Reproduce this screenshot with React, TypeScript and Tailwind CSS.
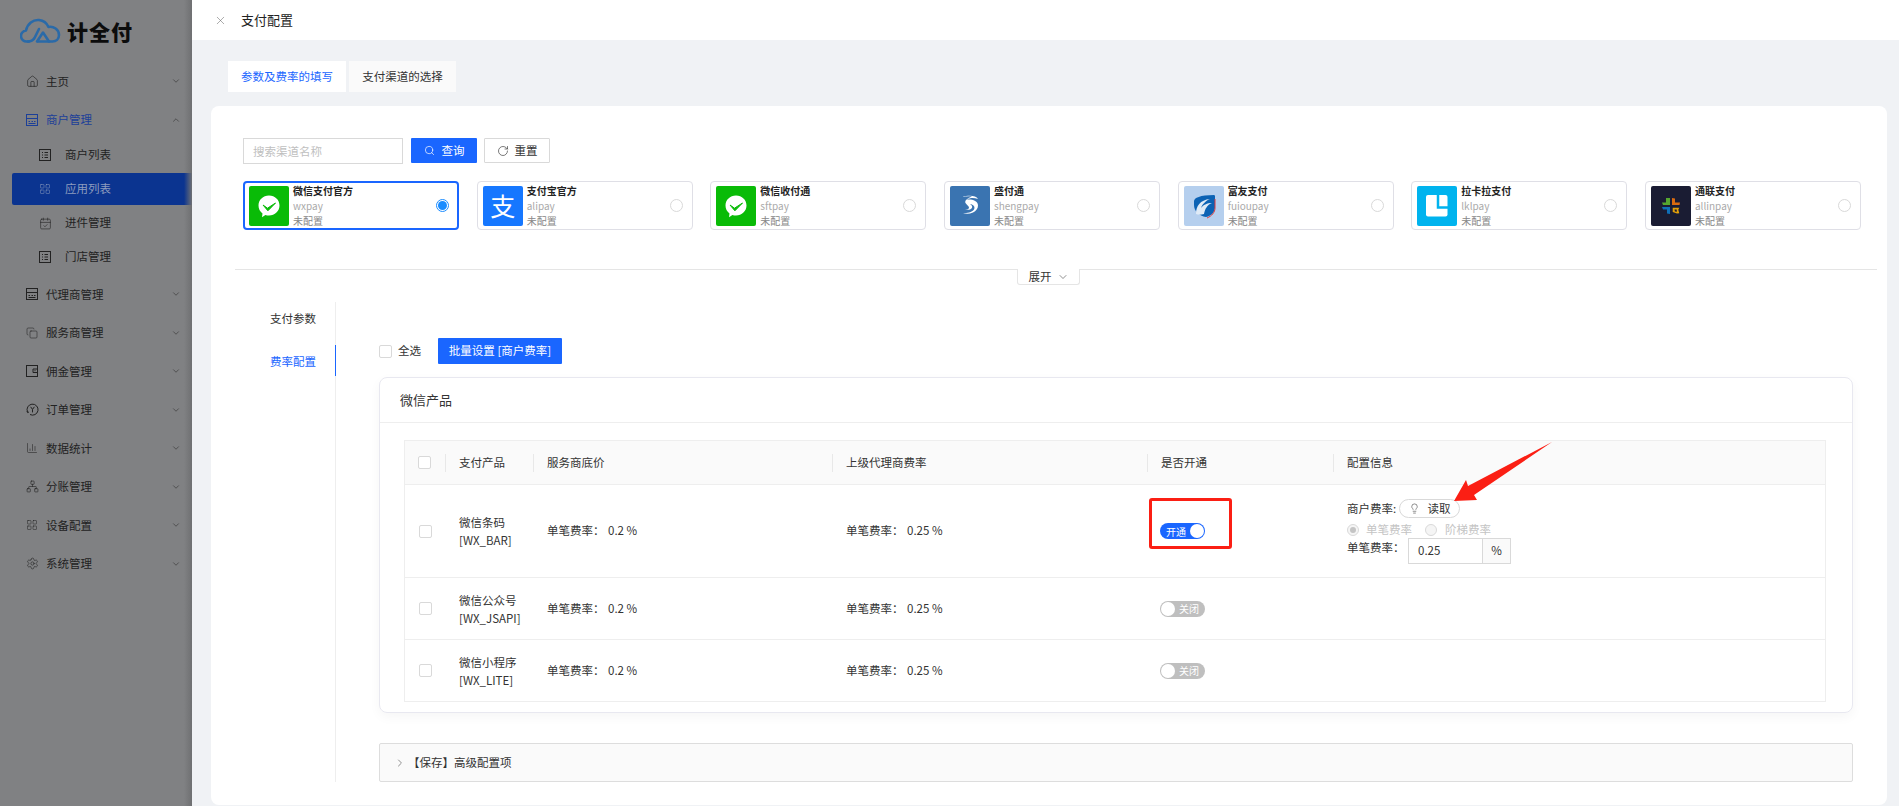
import React from "react";
import { Home, ChevronUp, ChevronDown, ChevronRight, LayoutGrid, Settings, Network, ChartColumn, Copy, X, Search, RotateCw, Lightbulb, CalendarCheck } from "lucide-react";

const BoxIcon = ({ c = "#222" }: { c?: string }) => (
  <svg width="12" height="12" viewBox="0 0 12 12" fill="none" stroke={c} strokeWidth="1"><rect x=".5" y=".5" width="11" height="11" /><path d="M.5 4.5h11M2.5 7.5h1.5M5.5 7.5h1.5M8 7.5h1.5M2.5 9.5h7" /></svg>
);
const ListIcon = () => (
  <svg width="12" height="12" viewBox="0 0 12 12" fill="none" stroke="#222" strokeWidth="1"><rect x=".5" y=".5" width="11" height="11" /><path d="M3 3.5h1M3 6h1M3 8.5h1M5.5 3.5H9M5.5 6H9M5.5 8.5H9" /></svg>
);
const WalletIcon = () => (
  <svg width="12" height="12" viewBox="0 0 12 12" fill="none" stroke="#222" strokeWidth="1"><rect x=".5" y=".5" width="11" height="11" /><path d="M11.5 4H7v3.5h4.5" /><path d="M8.5 5.7h1" /></svg>
);
const OrderIcon = () => (
  <svg width="13" height="13" viewBox="0 0 13 13" fill="none" stroke="#222" strokeWidth="1"><path d="M1.5 8.8A5.5 5.5 0 1 1 4 11.5M1 8l.5 1.6L3 9" /><path d="M4.6 3.8l1.9 2.6 1.9-2.6M6.5 6.4v3" /></svg>
);

const L = ({ children, cls = "" }: { children: React.ReactNode; cls?: string }) => <span className={cls}>{children}</span>;

const Top = ({ icon, label, up, active }: { icon: React.ReactNode; label: string; up?: boolean; active?: boolean }) => (
  <div className={`flex h-[38.5px] items-center pl-[26px] pr-[11px] text-[11.5px] ${active ? "text-[#1c3f98]" : "text-[#222]"}`}>
    <span className="flex w-[20px] shrink-0 items-center">{icon}</span>
    <span className="flex-1">{label}</span>
    {up ? <ChevronUp size={10} strokeWidth={1.5} color="#333" /> : <ChevronDown size={10} strokeWidth={1.5} color="#333" />}
  </div>
);
const Sub = ({ icon, label, active }: { icon: React.ReactNode; label: string; active?: boolean }) => (
  <div className={`ml-[12px] my-[2px] flex h-[32px] items-center rounded-l-[2px] pl-[27px] text-[11.5px] ${active ? "bg-[#0b3490] text-[#8d9cbe]" : "text-[#222]"}`}>
    <span className="flex w-[26px] shrink-0 items-center">{icon}</span>
    {label}
  </div>
);

const WeChat = () => (
  <svg viewBox="0 0 40 40" className="h-full w-full">
    <rect width="40" height="40" rx="2" fill="#09bb07" />
    <path d="M20 9.5c6 0 10.5 4.4 10.5 10s-4.600 10-10.500 10c-1.300 0-2.500-.2-3.600-.6l-3.400 2.300.5-3.800c-2.600-1.800-4-4.700-4-7.900 0-5.600 4.500-10 10.500-10z" fill="#fff" />
    <path d="M14 19l4.500 3.200 8-5.200-7.600 7.800z" fill="#09bb07" stroke="#09bb07" strokeWidth="1" strokeLinejoin="round" />
  </svg>
);
const Sheng = () => (
  <svg viewBox="0 0 40 40" className="h-full w-full">
    <rect width="40" height="40" rx="2" fill="#3a74b1" />
    <path d="M12 11c6-2 14-2 16 2-4-1.500-8-1.500-11 .5 5-.5 11 1 11 6 0 3-2 5.500-5 7-3.500 1.500-7 1.500-10 .5 4 0 9-.5 11-3.500 1.500-2.500-.5-5-4-5.500 2.500 1.500 3 3.500 1 5-2 1-4 1-6 .5 2 0 3.500-.5 4-1.500.3-1.500-2-3-3.500-5-1-2 1-4.500 6.500-6.500-3-.5-7 0-10.500.5z" fill="#fff" />
  </svg>
);
const Fuiou = () => (
  <svg viewBox="0 0 40 40" className="h-full w-full">
    <rect width="40" height="40" rx="2" fill="#b5cfee" />
    <path d="M10 15c0-3 6-6 20-6 1 0 1 1 1 2v10c0 4-3 9-9 10-7-1-12-6-12-12z" fill="#0c62b4" />
    <path d="M12 28c0-8 4-14 14-15-5 2-8 6-9 9 2-3 6-5 11-5-5 2-7 6-8 11-3 1-6 1-8 0z" fill="#dfeaf6" />
    <path d="M31 13v9c0 4-3 8-8 10" stroke="#e23a3a" strokeWidth="1" fill="none" />
  </svg>
);
const Lkl = () => (
  <svg viewBox="0 0 40 40" className="h-full w-full">
    <rect width="40" height="40" rx="2" fill="#00b3ee" />
    <rect x="9" y="9" width="21.500" height="21.500" rx="2" fill="#fff" />
    <path d="M21 8v13.500h10" stroke="#00b3ee" strokeWidth="2.500" fill="none" />
  </svg>
);
const Allin = () => (
  <svg viewBox="0 0 40 40" className="h-full w-full">
    <rect width="40" height="40" rx="2" fill="#1a1c33" />
    <path d="M19 12v7h-7l-1-2.500h4V12z" fill="#55a630" />
    <path d="M21 12l3 .5v4h5l-.5 2.500H21z" fill="#d96a10" />
    <path d="M11 21h8v7l-3-.5v-4h-4z" fill="#0e6fb8" />
    <path d="M21.700 21.700h6.600l-1 2 1 3.600-2.300.2-4.300-1.500zM23.500 23.500l.4 2 2 .3-.2-2.300z" fill="#e3a008" fillRule="evenodd" />
  </svg>
);

const channels = [
  { t: "微信支付官方", s: "wxpay", logo: <WeChat />, sel: true },
  { t: "支付宝官方", s: "alipay", logo: <div className="flex h-full w-full items-center justify-center rounded-[2px] bg-[#1677ff] text-[25px] leading-none text-white">支</div> },
  { t: "微信收付通", s: "sftpay", logo: <WeChat /> },
  { t: "盛付通", s: "shengpay", logo: <Sheng /> },
  { t: "富友支付", s: "fuioupay", logo: <Fuiou /> },
  { t: "拉卡拉支付", s: "lklpay", logo: <Lkl /> },
  { t: "通联支付", s: "allinpay", logo: <Allin /> },
];

const Check = () => <span className="block h-[13px] w-[13px] rounded-[2px] border border-[#d9d9d9] bg-white" />;

const Toggle = ({ on }: { on?: boolean }) =>
  on ? (
    <div className="flex h-[16px] w-[45px] items-center justify-between rounded-full bg-[#1a66ff] pl-[6px] pr-[1px] text-[10px] text-white">
      <span>开通</span>
      <span className="h-[14px] w-[14px] rounded-full bg-white" />
    </div>
  ) : (
    <div className="flex h-[16px] w-[45px] items-center justify-between rounded-full bg-[#bfbfbf] pl-[1px] pr-[6px] text-[10px] text-white">
      <span className="h-[14px] w-[14px] rounded-full bg-white" />
      <span>关闭</span>
    </div>
  );

const Rate = ({ v }: { v: string }) => (
  <span className="flex text-[11.5px] text-[#333]">
    <span className="w-[61px]">单笔费率：</span>
    <span>{v} %</span>
  </span>
);

const grid = "grid grid-cols-[40px_88px_299px_315px_186px_1fr]";

const Row = ({ name, code, h, on, config }: { name: string; code: string; h: string; on?: boolean; config?: boolean }) => (
  <div className={`${grid} ${h} border-t border-[#eeeeee] text-[11.5px] text-[#333]`}>
    <div className="flex items-center pl-[14px]"><Check /></div>
    <div className="flex flex-col justify-center pl-[14px] leading-[18px]">
      <span>{name}</span>
      <span>{code}</span>
    </div>
    <div className="flex items-center pl-[14px]"><Rate v="0.2" /></div>
    <div className="flex items-center pl-[14px]"><Rate v="0.25" /></div>
    <div className="relative flex items-center pl-[13px]">
      <Toggle on={on} />
      {config && <div className="absolute left-[2px] top-[13px] h-[51px] w-[83px] rounded-[3px] border-[3px] border-[#fb1f14]" />}
    </div>
    <div className="pl-[14px]">
      {config && (
        <div className="flex flex-col pt-[14px]">
          <div className="flex h-[19px] items-center">
            <span className="w-[52px]">商户费率:</span>
            <span className="flex h-[19px] w-[61px] items-center justify-center gap-[8px] rounded-full border border-[#d9d9d9] bg-white">
              <Lightbulb size={11} strokeWidth={1.3} color="#444" />
              读取
            </span>
          </div>
          <div className="flex h-[20px] items-center pt-[4px] text-[#c4c4c4]">
            <span className="flex h-[12px] w-[12px] items-center justify-center rounded-full border border-[#d9d9d9] bg-[#f5f5f5]"><span className="h-[6px] w-[6px] rounded-full bg-[#c4c4c4]" /></span>
            <span className="ml-[7px]">单笔费率</span>
            <span className="ml-[13px] h-[12px] w-[12px] rounded-full border border-[#d9d9d9] bg-[#f5f5f5]" />
            <span className="ml-[8px]">阶梯费率</span>
          </div>
          <div className="flex h-[26px] items-start">
            <span className="w-[61px] pt-[1px]">单笔费率：</span>
            <div className="flex h-[26px] w-[103px] border border-[#d9d9d9]">
              <span className="flex flex-1 items-center pl-[9px]">0.25</span>
              <span className="flex w-[28px] items-center justify-center border-l border-[#d9d9d9] bg-[#fafafa]">%</span>
            </div>
          </div>
        </div>
      )}
    </div>
  </div>
);

export default function App() {
  return (
    <div className="relative flex h-[806px] w-[1899px] overflow-hidden bg-white font-['Noto_Sans_CJK_SC','Noto_Sans',sans-serif]">
      <aside className="relative w-[192px] shrink-0 bg-[#808183]">
        <div className="flex h-[62px] items-start pl-[20px] pt-[18px]">
          <svg width="41" height="26" viewBox="0 0 41 26" fill="none" stroke="#2a6aa8" strokeWidth="2.600" strokeLinecap="round" strokeLinejoin="round">
            <path d="M9 23.500H7a5.500 5.500 0 0 1-1-11C7.500 5.500 13 1.500 19 2c4.500.5 8 3.500 9.500 7 5-1 10.500 2.500 10.500 8 0 4-3 6.500-6.500 6.500H18" />
            <path d="M8 23.500c3 0 5-1 6.500-3.500L19 11M17 23.500l6-9 6 9" />
          </svg>
          <span className="ml-[6px] text-[21px] font-black leading-[26px] tracking-[1px] text-[#0c0c0c]">计全付</span>
        </div>
        <Top icon={<Home size={13} strokeWidth={1.2} color="#222" />} label="主页" />
        <Top icon={<BoxIcon c="#1c3f98" />} label="商户管理" up active />
        <div className="-mt-[2px] mb-[2px]">
          <Sub icon={<ListIcon />} label="商户列表" />
          <Sub icon={<LayoutGrid size={12} strokeWidth={1} color="#8d9cbe" />} label="应用列表" active />
          <Sub icon={<CalendarCheck size={13} strokeWidth={1.1} color="#222" />} label="进件管理" />
          <Sub icon={<ListIcon />} label="门店管理" />
        </div>
        <Top icon={<BoxIcon />} label="代理商管理" />
        <Top icon={<Copy size={12} strokeWidth={1.1} color="#222" />} label="服务商管理" />
        <Top icon={<WalletIcon />} label="佣金管理" />
        <Top icon={<OrderIcon />} label="订单管理" />
        <Top icon={<ChartColumn size={12} strokeWidth={1.1} color="#222" />} label="数据统计" />
        <Top icon={<Network size={13} strokeWidth={1.1} color="#222" />} label="分账管理" />
        <Top icon={<LayoutGrid size={12} strokeWidth={1} color="#222" />} label="设备配置" />
        <Top icon={<Settings size={13} strokeWidth={1.1} color="#222" />} label="系统管理" />
        <div className="absolute inset-y-0 right-0 w-[8px] bg-gradient-to-l from-[#6f7072] to-transparent" />
      </aside>

      <main className="flex min-w-0 flex-1 flex-col bg-[#f0f2f5]">
        <header className="flex h-[40px] shrink-0 items-center bg-white pl-[22px] text-[13px] text-[#222]">
          <X size={13} strokeWidth={1} color="#666" />
          <span className="ml-[14px]">支付配置</span>
        </header>
        <div className="mt-[21px] flex h-[31px] shrink-0 pl-[36px] text-[11.5px]">
          <div className="flex w-[118px] items-center justify-center bg-white text-[#1a66ff]">参数及费率的填写</div>
          <div className="ml-[3px] flex w-[107px] items-center justify-center bg-[#fafafa] text-[#333]">支付渠道的选择</div>
        </div>
        <section className="mb-[1px] ml-[19px] mr-[12px] mt-[14px] flex-1 rounded-lg bg-white pl-[32px] pt-[32px]">
          <div className="flex h-[26px] items-start text-[11.5px]">
            <input placeholder="搜索渠道名称" className="h-[26px] w-[160px] border border-[#d9d9d9] pl-[9px] text-[11.5px] outline-none placeholder:text-[#bfbfbf]" />
            <button className="ml-[8px] flex h-[25px] w-[66px] items-center justify-center gap-[7px] rounded-[1px] bg-[#1a66ff] text-white">
              <Search size={11} strokeWidth={1.5} color="#fff" />查询
            </button>
            <button className="ml-[7px] flex h-[25px] w-[66px] items-center justify-center gap-[6px] rounded-[1px] border border-[#d9d9d9] text-[#333]">
              <RotateCw size={12} strokeWidth={1.4} color="#444" />重置
            </button>
          </div>

          <div className="mt-[17px] grid w-[1618px] grid-cols-7 gap-[17.600px]">
            {channels.map((c) => (
              <div key={c.s} className={`flex h-[49px] items-center rounded-[4px] bg-white ${c.sel ? "border-2 border-[#1a66ff] pl-[4px] pr-[8px]" : "border border-[#dfdfe6] pl-[5px] pr-[9px]"}`}>
                <div className="h-[40px] w-[40px] shrink-0">{c.logo}</div>
                <div className="ml-[4px] flex-1 text-[10px] leading-[15px]">
                  <div className="font-bold text-[#222]">{c.t}</div>
                  <div className="text-[#aaaaaa]">{c.s}</div>
                  <div className="text-[#888888]">未配置</div>
                </div>
                {c.sel ? (
                  <span className="flex h-[13px] w-[13px] items-center justify-center rounded-full border border-[#1a8cff]"><span className="h-[9px] w-[9px] rounded-full bg-[#1a8cff]" /></span>
                ) : (
                  <span className="h-[13px] w-[13px] rounded-full border border-[#d9d9d9]" />
                )}
              </div>
            ))}
          </div>

          <div className="relative -ml-[8px] mt-[39px] h-px w-[1642px] bg-[#e5e5e5]">
            <div className="absolute left-[782px] top-0 flex h-[16px] w-[63px] items-center justify-center gap-[5px] rounded-b-[3px] border border-t-0 border-[#e5e5e5] bg-white text-[11.5px] text-[#333]">
              展开<ChevronDown size={12} strokeWidth={1.2} color="#444" />
            </div>
          </div>

          <div className="mt-[32px] flex h-[480px]">
            <div className="relative w-[93px] shrink-0 border-r border-[#eeeeee] pl-[27px] text-[11.5px]">
              <div className="pt-[8px] leading-[16px] text-[#333]">支付参数</div>
              <div className="mt-[27px] leading-[16px] text-[#1a66ff]">费率配置</div>
              <div className="absolute -right-px top-[43px] h-[31px] w-px bg-[#1a66ff]" />
            </div>
            <div className="w-[1474px] pl-[0px] ml-[43px]">
              <div className="mt-[36px] flex h-[26px] items-center text-[11.5px]">
                <Check />
                <span className="ml-[6px] text-[#333]">全选</span>
                <button className="ml-[17px] h-[26px] w-[124px] rounded-[1px] bg-[#1a66ff] text-[11.5px] text-white">批量设置 [商户费率]</button>
              </div>
              <div className="mt-[13px] h-[336px] rounded-lg border border-[#e8e8f0] shadow-[0_4px_12px_rgba(0,0,0,0.04)]">
                <div className="flex h-[45px] items-center border-b border-[#eeeeee] pl-[20px] text-[13px] text-[#333]">微信产品</div>
                <div className="ml-[24px] mr-[26px] mt-[17px] border border-[#eeeeee]">
                  <div className={`${grid} h-[43px] items-center bg-[#fafafa] text-[11.5px] text-[#333]`}>
                    <div className="pl-[13px]"><Check /></div>
                    {["支付产品", "服务商底价", "上级代理商费率", "是否开通", "配置信息"].map((t) => (
                      <div key={t} className="flex h-[18px] items-center border-l border-[#e8e8e8] pl-[13px]">{t}</div>
                    ))}
                  </div>
                  <Row name="微信条码" code="[WX_BAR]" h="h-[93px]" on config />
                  <Row name="微信公众号" code="[WX_JSAPI]" h="h-[62px]" />
                  <Row name="微信小程序" code="[WX_LITE]" h="h-[62px]" />
                </div>
              </div>
              <div className="mt-[30px] flex h-[39px] items-center rounded-[2px] border border-[#dddddd] bg-[#fafafa] pl-[14px] text-[11.5px] text-[#333]">
                <ChevronRight size={12} strokeWidth={1.2} color="#444" />
                <span className="ml-[2px]">【保存】高级配置项</span>
              </div>
            </div>
          </div>
        </section>
      </main>

      <svg className="absolute left-[1440px] top-[436px]" width="120" height="70" viewBox="0 0 120 70">
        <polygon points="14,65 26,44 28,50 112,6 34,59 37,64" fill="#fb1f14" />
      </svg>
    </div>
  );
}
